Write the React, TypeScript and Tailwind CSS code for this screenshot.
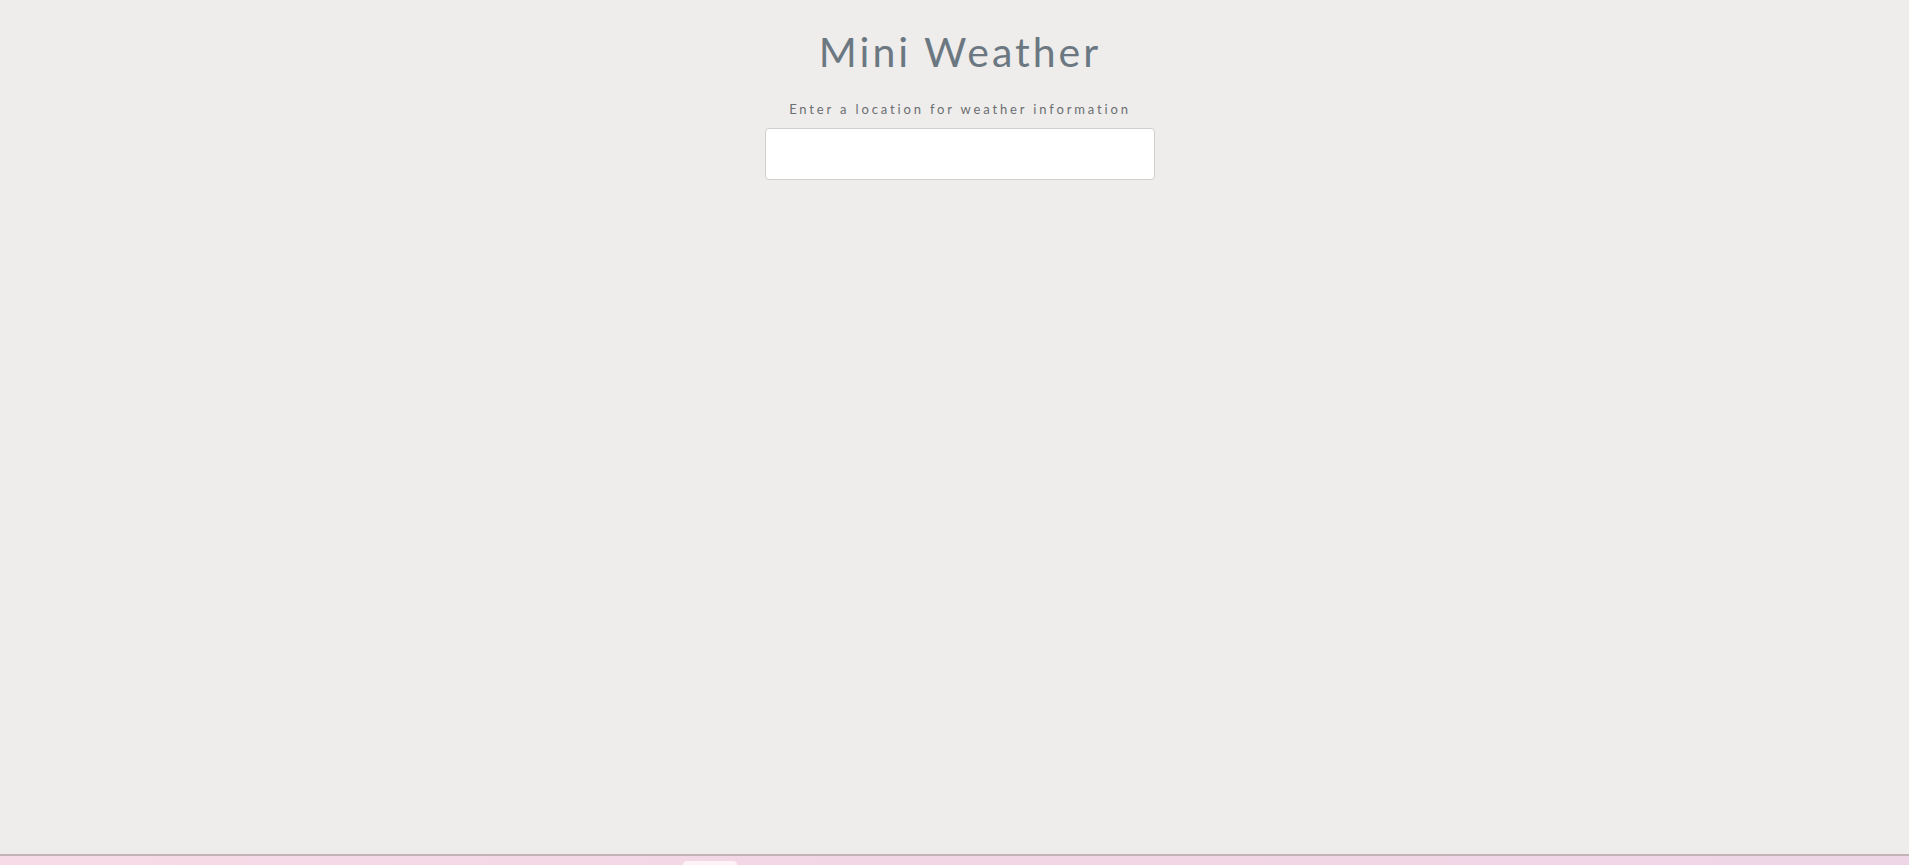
import { useState } from "react";

export default function App() {
  const [location, setLocation] = useState("");

  return (
    <div className="h-screen flex flex-col bg-[#eeedeb] font-['Lato',_'Open_Sans',_sans-serif] overflow-hidden">
      <main className="flex-1 flex flex-col items-center pt-[32px] pl-[11px]">
        <h1 className="text-[41px] leading-[40px] tracking-[3px] text-[#6b7882] font-normal">
          Mini Weather
        </h1>
        <p className="mt-[29px] text-[13px] leading-[16px] tracking-[2.85px] text-[#6b6e72]">
          Enter a location for weather information
        </p>
        <input
          type="text"
          value={location}
          onChange={(e) => setLocation(e.target.value)}
          className="mt-[11px] w-[390px] h-[52px] bg-white border border-[#cfcfcf] rounded-[4px] px-3 text-lg text-gray-700 outline-none"
        />
      </main>

      {/* bottom strip */}
      <div className="h-[11px] border-t-2 border-[#c0b4b9] bg-gradient-to-r from-[#f7dbe6] via-[#f3d6e6] to-[#efd6e6] flex">
        <div className="ml-[683px] mt-[5px] w-[54px] h-[6px] bg-[#fdf3f6] rounded-t-[4px]" />
      </div>
    </div>
  );
}
